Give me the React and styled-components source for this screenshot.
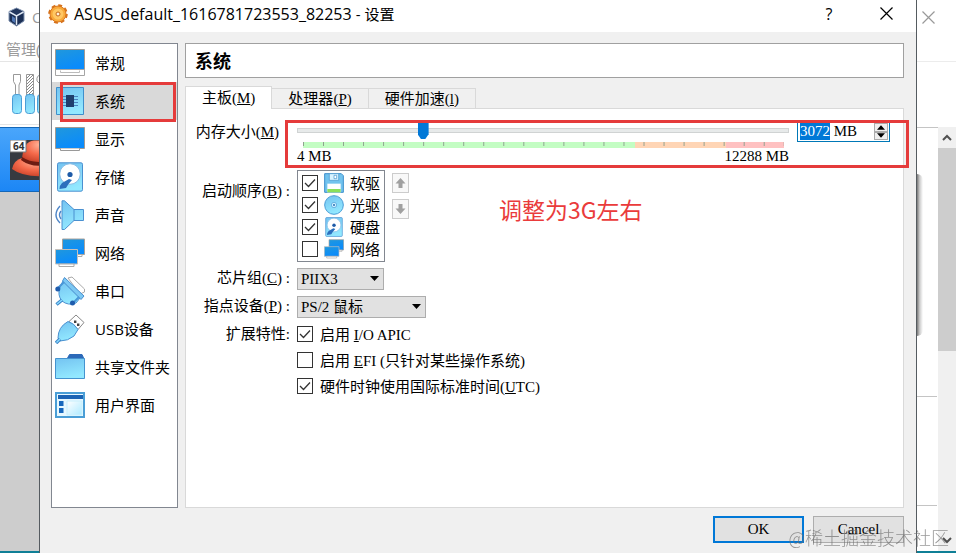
import React, { useEffect, useRef, useState } from "react";
import styled, { createGlobalStyle } from "styled-components";

const GlobalStyle = createGlobalStyle`
  * {
    box-sizing: border-box;
  }
  body {
    margin: 0;
    overflow: hidden;
    background: #fff;
    color: #000;
    font-family: "Liberation Serif", "Noto Sans CJK SC", serif;
    font-size: 15px;
  }
  button, input, select {
    font: inherit;
    color: inherit;
    margin: 0;
    padding: 0;
    border: 0;
    border-radius: 0;
    background: none;
    outline: none;
  }
  svg {
    display: block;
    flex: none;
  }
`;

const uiFont = `"Open Sans", "Noto Sans CJK SC", sans-serif`;

/* ---------- page ---------- */

const Desktop = styled.div`
  display: grid;
  grid-template-columns: 39px minmax(0, 1fr) 39px;
  height: 100vh;
  overflow: hidden;
`;

const BackWindow = styled.div`
  display: flex;
  flex-direction: column;
  min-width: 0;
  overflow: hidden;
  background: #fff;
  border-bottom: 2px solid #0f7f96;
`;

const BackTitle = styled.div`
  display: flex;
  align-items: center;
  gap: 7px;
  height: 34px;
  padding-left: 8px;
  color: #999;
  font-family: ${uiFont};
`;

const BackMenu = styled.div`
  height: 28px;
  padding-left: 6px;
  border-bottom: 1px solid #e5e5e5;
  color: #999;
  font-family: ${uiFont};
  line-height: 30px;
  white-space: nowrap;
`;

const BackTools = styled.div`
  height: 63px;
  padding: 11px 0 0 11px;
  border-bottom: 1px solid #e5e5e5;
`;

const Machine = styled.div`
  height: 65px;
  margin-top: 2px;
  padding: 12px 0 0 10px;
  border: solid #1467b8;
  border-width: 1px 0;
  background: linear-gradient(#4aa6fb, #1c86f5);
`;

const BackRest = styled.div`
  flex: 1;
  background: #cdcdcd;
`;

const BackClose = styled.div`
  height: 62px;
  padding: 11px 0 0 5px;
  border-bottom: 1px solid #ececec;
`;

const BackBar = styled.div`
  height: 65px;
`;

const BackBody = styled.div`
  display: grid;
  grid-template-columns: minmax(0, 1fr) 18px;
  flex: 1;
`;

const BackPanel = styled.div`
  position: relative;
  display: flex;
  flex-direction: column;
  border-top: 1px solid #c4c4c4;
`;

const PanelShade = styled.div`
  position: absolute;
  left: 0;
  top: 46px;
  width: 6px;
  height: 162px;
  border-radius: 0 6px 6px 0;
  background: linear-gradient(to right, #777, #ccc 45%, #fff);
`;

const PanelPart = styled.div`
  height: ${(p) => p.$height}px;
  margin-right: 1px;
  border-bottom: 1px solid #c4c4c4;
`;

const ScrollBar = styled.div`
  display: flex;
  flex-direction: column;
  background: #f0f0f0;
`;

const ScrollEnd = styled.div`
  display: flex;
  align-items: center;
  justify-content: center;
  height: 21px;
`;

const ScrollThumb = styled.div`
  height: 203px;
  margin-bottom: auto;
  background: #cdcdcd;
`;

/* ---------- dialog ---------- */

const Dialog = styled.div`
  display: flex;
  flex-direction: column;
  min-width: 0;
  border: solid #555b60;
  border-width: 0 1px;
  background: #f0f0f0;
`;

const TitleBar = styled.header`
  display: flex;
  align-items: center;
  height: 32px;
  padding: 0 12px 5px 8px;
  background: #fff;
  font-family: ${uiFont};
`;

const TitleText = styled.h1`
  flex: 1;
  margin: 0 0 0 6px;
  font-size: 16px;
  font-weight: 400;
  line-height: 20px;

  small {
    font-size: 15px;
  }
`;

const TitleButton = styled.button`
  display: flex;
  align-items: center;
  justify-content: center;
  width: 36px;
  height: 24px;
  margin-left: 21px;
  font-size: 16px;
`;

const DialogBody = styled.div`
  display: flex;
  flex: 1;
  gap: 7px;
  min-height: 0;
  padding: 11px 12px 0 11px;
`;

const SideList = styled.nav`
  width: 127px;
  border: 1px solid #828790;
  background: #fff;
`;

const SideSlot = styled.div`
  position: relative;
`;

const SideItem = styled.button`
  display: flex;
  align-items: center;
  gap: 10px;
  width: 100%;
  height: 38px;
  padding-left: 3px;
  background: ${(p) => (p.$active ? "#d9d9d9" : "#fff")};
  font-family: ${uiFont};
  white-space: nowrap;

  span {
    padding-bottom: 2px;
  }
`;

const Content = styled.main`
  display: flex;
  flex: 1;
  flex-direction: column;
  min-width: 0;
`;

const PageTitle = styled.h2`
  height: 35px;
  margin: 0 0 8px;
  padding-left: 9px;
  border: 1px solid #a0a0a0;
  background: #fff;
  font-family: "Noto Sans CJK SC", sans-serif;
  font-size: 18px;
  font-weight: 700;
  line-height: 32px;
`;

const TabRow = styled.div`
  display: flex;
  align-items: flex-end;
  height: 22px;
`;

const Tab = styled.button`
  height: ${(p) => (p.$active ? 23 : 20)}px;
  margin-bottom: ${(p) => (p.$active ? -1 : 0)}px;
  padding: 0 16px;
  border: 1px solid #d9d9d9;
  border-left-width: ${(p) => (p.$active ? 1 : 0)}px;
  border-bottom: 0;
  background: ${(p) => (p.$active ? "#fff" : "#f0f0f0")};
  line-height: 20px;
  white-space: nowrap;
  z-index: ${(p) => (p.$active ? 1 : 0)};
`;

const Pane = styled.section`
  position: relative;
  flex: 1;
  padding: 13px 13px 0 0;
  border: 1px solid #d9d9d9;
  background: #fff;
`;

const Form = styled.div`
  display: grid;
  grid-template-columns: 104px minmax(0, 1fr);
  gap: 6px 7px;
`;

const FieldLabel = styled.label`
  padding: ${(p) => p.$drop || 0}px ${(p) => (p.$plain ? 11 : 0)}px 0 0;
  line-height: 20px;
  text-align: right;
  white-space: nowrap;
`;

const MemoryRow = styled.div`
  display: flex;
  align-items: flex-start;
  gap: 8px;
`;

const SliderBox = styled.div`
  flex: 1;
`;

const Slider = styled.input`
  display: block;
  width: 100%;
  height: 17px;
  appearance: none;

  &::-webkit-slider-runnable-track {
    height: 5px;
    border: 1px solid #d0d3d3;
    background: #e7eaea;
  }
  &::-webkit-slider-thumb {
    appearance: none;
    width: 11px;
    height: 17px;
    margin-top: -7px;
    background: #0078d7;
    clip-path: polygon(0 0, 100% 0, 100% 72%, 70% 100%, 30% 100%, 0 72%);
  }
`;

const Scale = styled.div`
  height: 6px;
  margin: 3px 5px 0 6px;
  background:
    linear-gradient(to right, #8fa08f 1px, transparent 1px) 0 0 / calc(100% / 24) 4px repeat-x,
    linear-gradient(to right, #c3fdc3 69%, #ffd5b5 69% 88%, #ffc1c1 88%);
`;

const ScaleText = styled.div`
  display: flex;
  justify-content: space-between;
  line-height: 16px;
`;

const SpinBox = styled.div`
  display: flex;
  width: 93px;
  height: 20px;
  padding: 0 1px 1px 2px;
  border: 1px solid #0078b7;
  background: #fff;
`;

const SpinInput = styled.input`
  flex: 1;
  min-width: 0;

  &::selection {
    background: #0078d7;
    color: #fff;
  }
`;

const SpinButtons = styled.div`
  display: grid;
  grid-template-rows: 1fr 1fr;
  width: 14px;
`;

const SpinButton = styled.button`
  display: flex;
  align-items: center;
  justify-content: center;
  border: 1px solid #acacac;
  background: #f0f0f0;
`;

const BootRow = styled.div`
  display: flex;
  align-items: flex-start;
  gap: 7px;
`;

const BootList = styled.div`
  padding: 1px 4px;
  border: 1px solid #828790;
`;

const BootItem = styled.label`
  display: flex;
  align-items: center;
  gap: 6px;
  height: 22px;
  font-family: ${uiFont};

  span {
    padding-bottom: 2px;
  }
`;

const BootButtons = styled.div`
  display: grid;
  gap: 6px;
  padding-top: 3px;
`;

const BootButton = styled.button`
  display: flex;
  align-items: center;
  justify-content: center;
  width: 17px;
  height: 20px;
  border: 1px solid #ccc;
  background: #f8f8f8;
`;

const tick = `url("data:image/svg+xml,%3Csvg xmlns='http://www.w3.org/2000/svg' viewBox='0 0 14 14'%3E%3Cpath d='M2 7l3.5 3.5L12 3.5' fill='none' stroke='%23333' stroke-width='1.3'/%3E%3C/svg%3E")`;

const CheckBox = styled.input`
  flex: none;
  width: 16px;
  height: 16px;
  appearance: none;
  border: 1px solid #333;
  background: #fff;

  &:checked {
    background: #fff ${tick} center / 14px 14px no-repeat;
  }
`;

const SelectBox = styled.div`
  position: relative;
  width: ${(p) => p.$width}px;
  height: 22px;

  svg {
    position: absolute;
    right: 5px;
    top: 8px;
    pointer-events: none;
  }
`;

const Select = styled.select`
  width: 100%;
  height: 22px;
  padding-left: 3px;
  appearance: none;
  border: 1px solid #adadad;
  background: #e1e1e1;
`;

const CheckList = styled.div`
  display: grid;
  gap: 6px;
`;

const CheckLine = styled.label`
  display: flex;
  align-items: center;
  gap: 7px;
  height: 20px;
  white-space: nowrap;

  span {
    padding-bottom: 2px;
  }
`;

const Footer = styled.footer`
  display: flex;
  justify-content: flex-end;
  gap: 9px;
  height: 45px;
  padding: 8px 12px 0;
`;

const PushButton = styled.button`
  width: 91px;
  height: 27px;
  border: ${(p) => (p.$primary ? "2px solid #0078d7" : "1px solid #adadad")};
  background: #e1e1e1;
`;

/* ---------- marks over the window ---------- */

const RedFrame = styled.div`
  position: absolute;
  z-index: 2;
  left: ${(p) => p.$left}px;
  right: ${(p) => p.$right}px;
  top: ${(p) => p.$top}px;
  height: ${(p) => p.$height}px;
  border: 3px solid #e53b3b;
  pointer-events: none;
`;

const RedNote = styled.p`
  position: absolute;
  left: 313px;
  top: 84px;
  margin: 0;
  color: #ea3b3b;
  font-family: "Noto Sans CJK SC", sans-serif;
  font-size: 23px;
  line-height: 32px;
`;

const Watermark = styled.div`
  position: fixed;
  right: 7px;
  bottom: 3px;
  color: rgba(110, 110, 110, 0.7);
  font-family: "Noto Sans CJK SC", sans-serif;
  font-size: 18px;
  font-weight: 300;
  line-height: 26px;
  pointer-events: none;
`;

/* ---------- icons ---------- */

const GradientSheet = styled.svg`
  position: absolute;
`;

const Gradients = () => (
  <GradientSheet width="0" height="0" aria-hidden="true">
    <defs>
      <linearGradient id="screen" x1="0" y1="0" x2="0.4" y2="1">
        <stop offset="0" stopColor="#2198dc" />
        <stop offset="1" stopColor="#0a8bfb" />
      </linearGradient>
      <linearGradient id="sky" x1="0" y1="0" x2="0.3" y2="1">
        <stop offset="0" stopColor="#74c3f1" />
        <stop offset="1" stopColor="#92e8ff" />
      </linearGradient>
      <linearGradient id="pale" x1="0" y1="0" x2="1" y2="1">
        <stop offset="0" stopColor="#fff" />
        <stop offset="1" stopColor="#aeeaff" />
      </linearGradient>
      <radialGradient id="hat" cx="0.6" cy="0.2" r="0.9">
        <stop offset="0" stopColor="#ffb095" />
        <stop offset="0.5" stopColor="#f4694a" />
        <stop offset="1" stopColor="#c03a22" />
      </radialGradient>
    </defs>
  </GradientSheet>
);

const Icon = ({ size = 30, children }) => (
  <svg width={size} height={size} viewBox="0 0 30 30" fill="none" aria-hidden="true">
    {children}
  </svg>
);

const GeneralIcon = () => (
  <Icon>
    <path d="M.5 1.5h29v20H.5z" fill="url(#screen)" stroke="#a09a94" />
    <path d="M.5 21.5h29v6H.5z" fill="#fff" stroke="#a5a5a5" />
    <path d="M5.5 22.5v2h19v-2" fill="#fff" stroke="#bbb" />
  </Icon>
);

const SystemIcon = () => (
  <Icon>
    <path d="M1.5 1.5h27v27h-27z" fill="url(#sky)" stroke="#3f8fcb" />
    <path d="M7 10.5h16M7 13.5h16M7 16.5h16M7 19.5h16" stroke="#4a83c0" />
    <path d="M11 9h8v12h-8z" fill="#1f3f6d" />
  </Icon>
);

const DisplayIcon = () => (
  <Icon>
    <path d="M.5 3.5h29v21H.5z" fill="url(#screen)" stroke="#a09a94" />
    <path d="M5.5 24.5v2h19v-2" fill="#fff" stroke="#999" />
  </Icon>
);

const DiskIcon = ({ size }) => (
  <Icon size={size}>
    <rect x="2.5" y=".8" width="25" height="28.4" rx="1.5" fill="url(#sky)" stroke="#4a90d0" />
    <circle cx="15" cy="12" r="10.3" fill="#fff" stroke="#8bbde6" />
    <path d="M14 17l3 1Q13 22 11 26L4.500 27Q4 24 7 21z" fill="#2c6fbd" />
    <circle cx="15" cy="12.500" r="2.600" fill="#1e5ba8" />
  </Icon>
);

const SoundIcon = () => (
  <Icon>
    <path d="M7 .8h2.500L19 9.500h9.500v11H19l-9.500 9H7z" fill="url(#sky)" stroke="#4a90d0" />
    <path d="M19 9.500v11" stroke="#4a90d0" />
    <path d="M5 6Q-3 15 5 23M6 11Q3 15 6 19" stroke="#4f86c8" strokeWidth="1.400" />
  </Icon>
);

const NetworkIcon = ({ size }) => (
  <Icon size={size}>
    <path d="M7.500 1h22v15.500h-22z" fill="url(#screen)" stroke="#a9a39c" />
    <path d="M21 16.500h6v2h-6z" fill="#fff" stroke="#aaa" />
    <path d="M.5 11.500h22V26H.5z" fill="url(#screen)" stroke="#c5c0bb" />
    <path d="M4 26h15v2.500H4z" fill="#fff" stroke="#aaa" />
  </Icon>
);

const SerialIcon = () => (
  <Icon>
    <path d="M13 2l4-1L29.500 13v3L25 18z" fill="#fff" stroke="#aaa" />
    <path d="M8 5L25 22 21 27Q13 30 7 25 2 19 5 11z" fill="url(#sky)" stroke="#4a90d0" />
    <path d="M9.500 1.500L29 20l-3 3.500L7.500 5z" fill="#7cc8f3" stroke="#4a90d0" />
    <path d="M7 24l-5.500 4.500" stroke="#3b86c8" strokeWidth="3.500" />
    <path d="M7 24l-5 4" stroke="#8bdaff" strokeWidth="1.500" />
    <path d="M3 12l6-6M18 27l6-6" stroke="#4a97d8" strokeWidth="2" />
    <circle cx="2.800" cy="13" r="2.500" fill="#1f5cad" />
    <circle cx="17.500" cy="27" r="2.500" fill="#1f5cad" />
  </Icon>
);

const UsbIcon = () => (
  <Icon>
    <path d="M21 1l8 7.500-6 7-9-8z" fill="#fff" stroke="#888" />
    <path d="M19 6.500h2.400v2.400H19zM22 9.500h2.400V12H22z" fill="#444" />
    <path d="M13 7.500Q19 9 23 15.500L19 22Q13 27 5 27L3 24Q3 13 13 7.500z" fill="url(#sky)" stroke="#4a90d0" />
    <path d="M5 25l-4 4" stroke="#3b86c8" strokeWidth="3.500" />
    <path d="M5 25l-3.500 3.500" stroke="#8bdaff" strokeWidth="1.500" />
  </Icon>
);

const FolderIcon = () => (
  <Icon>
    <path d="M12 7l2.500-4.500H27L29 7z" fill="#2c69b8" stroke="#2c69b8" />
    <path d="M.5 6.500h29v20H.5z" fill="url(#sky)" stroke="#4593cf" />
  </Icon>
);

const InterfaceIcon = () => (
  <Icon>
    <path d="M1 3h28v24H1z" fill="#e6f8ff" stroke="#4a9ed6" strokeWidth="2" />
    <path d="M3 5h25v4H3z" fill="#1c64b4" />
    <path d="M4 11h4.500v5H4zM4 18h4.500v5H4z" fill="#1768bd" />
    <path d="M12 11h15v14H12z" fill="url(#pale)" stroke="#c8effc" />
  </Icon>
);

const FloppyIcon = () => (
  <Icon size={20}>
    <path d="M1 1h25l3 3v25H1z" fill="#72c3ee" stroke="#3c8fcc" strokeWidth="1.500" />
    <path d="M8 1h14v10H8z" fill="#d9f3ff" stroke="#4394cc" />
    <path d="M15 3.500h4v5h-4z" fill="#fff" stroke="#3c8fcc" />
    <path d="M5 16h20v13H5z" fill="#fff" />
    <path d="M5 24h20v5H5z" fill="#8be05a" />
  </Icon>
);

const DiscIcon = () => (
  <Icon size={20}>
    <circle cx="15" cy="15" r="14" fill="url(#sky)" stroke="#4a9cd6" strokeWidth="1.500" />
    <circle cx="15" cy="15" r="4" fill="#c9eeff" stroke="#4a9cd6" />
    <circle cx="15" cy="15" r="1.500" fill="#2a6db0" />
  </Icon>
);

const GearIcon = () => (
  <svg width="20" height="20" viewBox="0 0 20 20" aria-hidden="true">
    <circle cx="10" cy="10" r="8" fill="none" stroke="#d5701a" strokeWidth="3.500" strokeDasharray="3.600 2.680" />
    <circle cx="10" cy="10" r="8" fill="#f8a93a" stroke="#d9771f" />
    <circle cx="10" cy="10" r="5.500" fill="#ffc763" />
    <circle cx="10" cy="10" r="2" fill="#fff3dc" stroke="#c4661a" />
  </svg>
);

const BoxIcon = () => (
  <svg width="17" height="20" viewBox="0 0 17 20" aria-hidden="true">
    <path d="M8.500 1L16 4.500V14l-7.500 5L1 14V4.500z" fill="#1b2f55" stroke="#7f92b0" />
    <path d="M3 4.500L8.500 2 14 4.500 8.500 8z" fill="#22375f" />
    <path d="M1.500 5L8.500 9 15.500 5M8.500 9v9" stroke="#dfe8f5" strokeWidth="1.500" fill="none" />
    <path d="M4 9l3 2v5l-3-2z" fill="#4f77b5" />
  </svg>
);

const ToolsIcon = () => (
  <svg width="40" height="42" viewBox="0 0 40 42" aria-hidden="true">
    <defs>
      <pattern id="hatch" width="3" height="3" patternUnits="userSpaceOnUse">
        <path d="M0 3L3 0" stroke="#888" />
      </pattern>
    </defs>
    <path d="M2.500 1.500h7v7L8 12v10H4.500V12l-2-3.500z" fill="#fff" stroke="#999" />
    <path d="M15.500 1.500h7V22h-7z" fill="url(#hatch)" stroke="#999" />
    <path d="M31 1.500Q25 2 26 8l4 4v10" fill="#fff" stroke="#999" />
    <rect x="1.500" y="21.500" width="9" height="19" rx="3" fill="url(#sky)" stroke="#4a9ed6" />
    <rect x="14.500" y="21.500" width="9" height="19" rx="3" fill="url(#sky)" stroke="#4a9ed6" />
    <rect x="26.500" y="21.500" width="9" height="19" rx="3" fill="url(#sky)" stroke="#4a9ed6" />
  </svg>
);

const HatIcon = () => (
  <svg width="40" height="40" viewBox="0 0 40 40" aria-hidden="true">
    <path d="M0 0h40v40H0z" fill="#363a40" />
    <path d="M2 29Q4 20 12 18l28 2v16Q14 38 2 29z" fill="url(#hat)" />
    <path d="M12 20Q13 1 24 .5T40 4v18H14z" fill="url(#hat)" />
    <path d="M12 17q12 8 28 3v4q-17 5-29-4z" fill="#6e1c12" />
    <path d="M0 0h16v12H0z" fill="#fff" stroke="#777" />
    <text x="3" y="10" fontSize="10" fontWeight="700" fontFamily="Open Sans, sans-serif" fill="#333">64</text>
  </svg>
);

const Cross = ({ size = 13, color = "#000" }) => (
  <svg width={size} height={size} viewBox="0 0 13 13" aria-hidden="true">
    <path d="M.5.5l12 12M12.500.5l-12 12" stroke={color} fill="none" strokeWidth="1.200" />
  </svg>
);

const Chevron = ({ down }) => (
  <svg width="10" height="7" viewBox="0 0 10 7" aria-hidden="true">
    <path d={down ? "M1 1l4 4 4-4" : "M1 6l4-4 4 4"} stroke="#505050" strokeWidth="2" fill="none" />
  </svg>
);

const Caret = ({ up, width = 9 }) => (
  <svg width={width} height="5" viewBox="0 0 9 5" aria-hidden="true">
    <path d={up ? "M0 5L4.500 0 9 5z" : "M0 0h9L4.500 5z"} fill="#000" />
  </svg>
);

const Arrow = ({ down }) => (
  <svg width="11" height="12" viewBox="0 0 11 12" aria-hidden="true">
    <path d={down ? "M3.500 1h4v4.500h3L5.500 11l-5-5.500h3z" : "M3.500 11h4V6.500h3L5.500 1l-5 5.500h3z"} fill="#a0a0a0" />
  </svg>
);

/* ---------- data ---------- */

const sections = [
  { name: "常规", icon: GeneralIcon },
  { name: "系统", icon: SystemIcon },
  { name: "显示", icon: DisplayIcon },
  { name: "存储", icon: DiskIcon },
  { name: "声音", icon: SoundIcon },
  { name: "网络", icon: NetworkIcon },
  { name: "串口", icon: SerialIcon },
  { name: "USB设备", icon: UsbIcon },
  { name: "共享文件夹", icon: FolderIcon },
  { name: "用户界面", icon: InterfaceIcon },
];

const bootDevices = [
  { name: "软驱", icon: FloppyIcon, on: true },
  { name: "光驱", icon: DiscIcon, on: true },
  { name: "硬盘", icon: DiskIcon, on: true },
  { name: "网络", icon: NetworkIcon, on: false },
];

const tabs = [
  ["主板", "M"],
  ["处理器", "P"],
  ["硬件加速", "l"],
];

/* ---------- parts ---------- */

const MemoryField = () => {
  const [memory, setMemory] = useState(3072);
  const spinRef = useRef(null);

  useEffect(() => {
    spinRef.current.focus();
    spinRef.current.setSelectionRange(0, 4);
  }, []);

  const change = (value) => setMemory(Math.min(12288, Math.max(4, value || 4)));

  return (
    <MemoryRow>
      <SliderBox>
        <Slider
          id="memory"
          type="range"
          min="4"
          max="12288"
          value={memory}
          onChange={(e) => change(Number(e.target.value))}
        />
        <Scale />
        <ScaleText>
          <span>4 MB</span>
          <span>12288 MB</span>
        </ScaleText>
      </SliderBox>
      <SpinBox>
        <SpinInput
          ref={spinRef}
          aria-label="内存大小"
          value={`${memory} MB`}
          onChange={(e) => change(parseInt(e.target.value, 10))}
        />
        <SpinButtons>
          <SpinButton type="button" aria-label="增加" onClick={() => change(memory + 1)}>
            <Caret up width={8} />
          </SpinButton>
          <SpinButton type="button" aria-label="减少" onClick={() => change(memory - 1)}>
            <Caret width={8} />
          </SpinButton>
        </SpinButtons>
      </SpinBox>
    </MemoryRow>
  );
};

const SystemForm = () => (
  <Form>
    <FieldLabel htmlFor="memory" $plain>内存大小(<u>M</u>)</FieldLabel>
    <MemoryField />

    <FieldLabel as="span" $drop={11}>启动顺序(<u>B</u>) :</FieldLabel>
    <BootRow>
      <BootList>
        {bootDevices.map(({ name, icon: DeviceIcon, on }) => (
          <BootItem key={name}>
            <CheckBox type="checkbox" defaultChecked={on} />
            <DeviceIcon size={20} />
            <span>{name}</span>
          </BootItem>
        ))}
      </BootList>
      <BootButtons>
        <BootButton type="button" aria-label="上移"><Arrow /></BootButton>
        <BootButton type="button" aria-label="下移"><Arrow down /></BootButton>
      </BootButtons>
    </BootRow>

    <FieldLabel htmlFor="chipset">芯片组(<u>C</u>) :</FieldLabel>
    <SelectBox $width={87}>
      <Select id="chipset" defaultValue="PIIX3">
        <option>PIIX3</option>
        <option>ICH9</option>
      </Select>
      <Caret />
    </SelectBox>

    <FieldLabel htmlFor="pointing">指点设备(<u>P</u>) :</FieldLabel>
    <SelectBox $width={129}>
      <Select id="pointing" defaultValue="PS/2 鼠标">
        <option>PS/2 鼠标</option>
        <option>USB 触控板</option>
      </Select>
      <Caret />
    </SelectBox>

    <FieldLabel as="span">扩展特性:</FieldLabel>
    <CheckList>
      <CheckLine>
        <CheckBox type="checkbox" defaultChecked />
        <span>启用 <u>I</u>/O APIC</span>
      </CheckLine>
      <CheckLine>
        <CheckBox type="checkbox" />
        <span>启用 <u>E</u>FI (只针对某些操作系统)</span>
      </CheckLine>
      <CheckLine>
        <CheckBox type="checkbox" defaultChecked />
        <span>硬件时钟使用国际标准时间(<u>U</u>TC)</span>
      </CheckLine>
    </CheckList>
  </Form>
);

const App = () => {
  const [section, setSection] = useState("系统");
  const [tab, setTab] = useState("主板");

  return (
    <Desktop>
      <GlobalStyle />
      <Gradients />

      <BackWindow>
        <BackTitle><BoxIcon />O</BackTitle>
        <BackMenu>管理(</BackMenu>
        <BackTools><ToolsIcon /></BackTools>
        <Machine><HatIcon /></Machine>
        <BackRest />
      </BackWindow>

      <Dialog role="dialog">
        <TitleBar>
          <GearIcon />
          <TitleText>ASUS_default_1616781723553_82253 <small>- 设置</small></TitleText>
          <TitleButton type="button">?</TitleButton>
          <TitleButton type="button" aria-label="关闭"><Cross /></TitleButton>
        </TitleBar>

        <DialogBody>
          <SideList>
            {sections.map(({ name, icon: SectionIcon }) => (
              <SideSlot key={name}>
                <SideItem type="button" $active={name === section} onClick={() => setSection(name)}>
                  <SectionIcon />
                  <span>{name}</span>
                </SideItem>
                {name === "系统" && <RedFrame $left={8} $right={1} $top={0} $height={40} />}
              </SideSlot>
            ))}
          </SideList>

          <Content>
            <PageTitle>{section}</PageTitle>
            <TabRow>
              {tabs.map(([name, key]) => (
                <Tab key={name} type="button" $active={name === tab} onClick={() => setTab(name)}>
                  {name}(<u>{key}</u>)
                </Tab>
              ))}
            </TabRow>
            <Pane>
              <SystemForm />
              <RedFrame $left={99} $right={-6} $top={11} $height={48} />
              <RedNote>调整为3G左右</RedNote>
            </Pane>
          </Content>
        </DialogBody>

        <Footer>
          <PushButton type="button" $primary>OK</PushButton>
          <PushButton type="button">Cancel</PushButton>
        </Footer>
      </Dialog>

      <BackWindow>
        <BackClose><Cross color="#999" /></BackClose>
        <BackBar />
        <BackBody>
          <BackPanel>
            <PanelShade />
            <PanelPart $height={269} />
            <PanelPart $height={109} />
          </BackPanel>
          <ScrollBar>
            <ScrollEnd><Chevron /></ScrollEnd>
            <ScrollThumb />
            <ScrollEnd><Chevron down /></ScrollEnd>
          </ScrollBar>
        </BackBody>
      </BackWindow>

      <Watermark>@稀土掘金技术社区</Watermark>
    </Desktop>
  );
};

export default App;
